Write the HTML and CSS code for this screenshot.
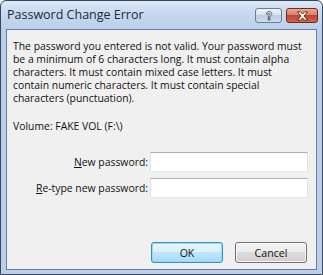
FILE: index.html
```html
<!DOCTYPE html>
<html>
<head>
<meta charset="utf-8">
<link rel="stylesheet" href="styles.css">
</head>
<body>
<div class="window">
  <div class="titlebar">
    <span class="title">Password Change Error</span>
    <div class="caption-buttons">
      <div class="cap help">
        <svg width="12" height="12" viewBox="0 0 12 12">
          <path d="M3.5 4.2 C3.5 2.2 5 1.5 6.2 1.5 C7.8 1.5 8.8 2.5 8.8 3.8 C8.8 5.3 7 5.6 7 7.2 L5.2 7.2 C5.2 5.3 6.9 4.9 6.9 3.9 C6.9 3.3 6.6 3 6.1 3 C5.6 3 5.3 3.4 5.3 4.2 Z M5.2 8.2 L7 8.2 L7 10 L5.2 10 Z" fill="#fff" stroke="#3d4a5a" stroke-width="0.9"/>
        </svg>
      </div>
      <div class="cap close">
        <svg width="13" height="10" viewBox="0 0 13 10">
          <path d="M1.5 0.8 L4.5 0.8 L6.5 3 L8.5 0.8 L11.5 0.8 L8.2 5 L11.5 9.2 L8.5 9.2 L6.5 7 L4.5 9.2 L1.5 9.2 L4.8 5 Z" fill="#fff" stroke="#5e1c12" stroke-width="0.9" stroke-linejoin="round"/>
        </svg>
      </div>
    </div>
  </div>
  <div class="content">
    <p class="message">The password you entered is not valid. Your password must<br>be a minimum of 6 characters long. It must contain alpha<br>characters. It must contain mixed case letters. It must<br>contain numeric characters. It must contain special<br>characters (punctuation).</p>
    <p class="volume">Volume: FAKE VOL (F:\)</p>
    <div class="form">
      <label class="label" for="np"><u>N</u>ew password:</label>
      <input class="field" id="np" type="password">
      <label class="label" for="rp"><u>R</u>e-type new password:</label>
      <input class="field" id="rp" type="password">
    </div>
    <div class="buttons">
      <button class="btn default">OK</button>
      <button class="btn">Cancel</button>
    </div>
  </div>
</div>
</body>
</html>
```
FILE: styles.css
```css
html, body {
  margin: 0;
  padding: 0;
  background: #ffffff;
}
body {
  font-family: "Open Sans", "Noto Sans", sans-serif;
}
.window {
  width: 323px;
  height: 275px;
  box-sizing: border-box;
  border: 1px solid #34475e;
  border-radius: 6px 6px 0 0;
  background: linear-gradient(180deg, #dbe7f5 0px, #c6d8ee 14px, #b9cfea 28px, #b9cfea 100%);
  padding: 0 5px 4px 5px;
  display: flex;
  flex-direction: column;
}
.titlebar {
  height: 28px;
  display: flex;
  align-items: flex-start;
  justify-content: space-between;
}
.title {
  margin-top: 6px;
  margin-left: 1px;
  font-size: 12.5px;
  color: #1b2a3c;
  line-height: 16px;
}
.caption-buttons {
  display: flex;
  gap: 4px;
  margin-top: 7px;
  margin-right: -1px;
}
.cap {
  height: 15px;
  box-sizing: border-box;
  border: 1px solid #6b7d93;
  border-radius: 3px;
  display: flex;
  align-items: center;
  justify-content: center;
}
.help {
  width: 27px;
  background: linear-gradient(180deg, #eef3f9 0%, #d5e1ef 45%, #bccde3 50%, #cddcee 100%);
}
.close {
  width: 32px;
  border-color: #6e2b20;
  background: linear-gradient(180deg, #e9a996 0%, #d9806a 45%, #c24530 50%, #d0634a 100%);
}
.content {
  flex: 1;
  background: #f0f0f0;
  border: 1px solid #6d7f96;
  padding: 10px 8px 6px 6px;
  display: flex;
  flex-direction: column;
  font-size: 10.4px;
  color: #111;
}
.message {
  margin: 0;
  line-height: 13px;
}
.volume {
  margin: 15px 0 0 0;
  line-height: 13px;
}
.form {
  margin-top: 19px;
  display: grid;
  grid-template-columns: 1fr 158px;
  column-gap: 2px;
  row-gap: 6px;
  align-items: center;
}
.label {
  text-align: right;
}
.field {
  height: 20px;
  box-sizing: border-box;
  margin: 0;
  border: 1px solid #e2e3ea;
  border-top-color: #abadb3;
  border-bottom-color: #e3e9ef;
  background: #fff;
  padding: 0;
}
.buttons {
  margin-top: auto;
  display: flex;
  justify-content: flex-end;
  gap: 12px;
  padding-right: 1px;
}
.btn {
  width: 72px;
  height: 21px;
  box-sizing: border-box;
  margin: 0;
  padding: 0;
  font-family: "Open Sans", "Noto Sans", sans-serif;
  font-size: 10.6px;
  color: #111;
  border: 1px solid #707070;
  border-radius: 3px;
  background: linear-gradient(180deg, #f2f2f2 0%, #ebebeb 50%, #dddddd 50%, #cfcfcf 100%);
  box-shadow: inset 0 0 0 1px rgba(255,255,255,0.8);
}
.btn.default {
  border-color: #3c8dbc;
  background: linear-gradient(180deg, #e8f5fc 0%, #d9f0fc 50%, #bee6fd 50%, #a7d9f5 100%);
  box-shadow: inset 0 0 0 1px #96d9f9;
}
```
